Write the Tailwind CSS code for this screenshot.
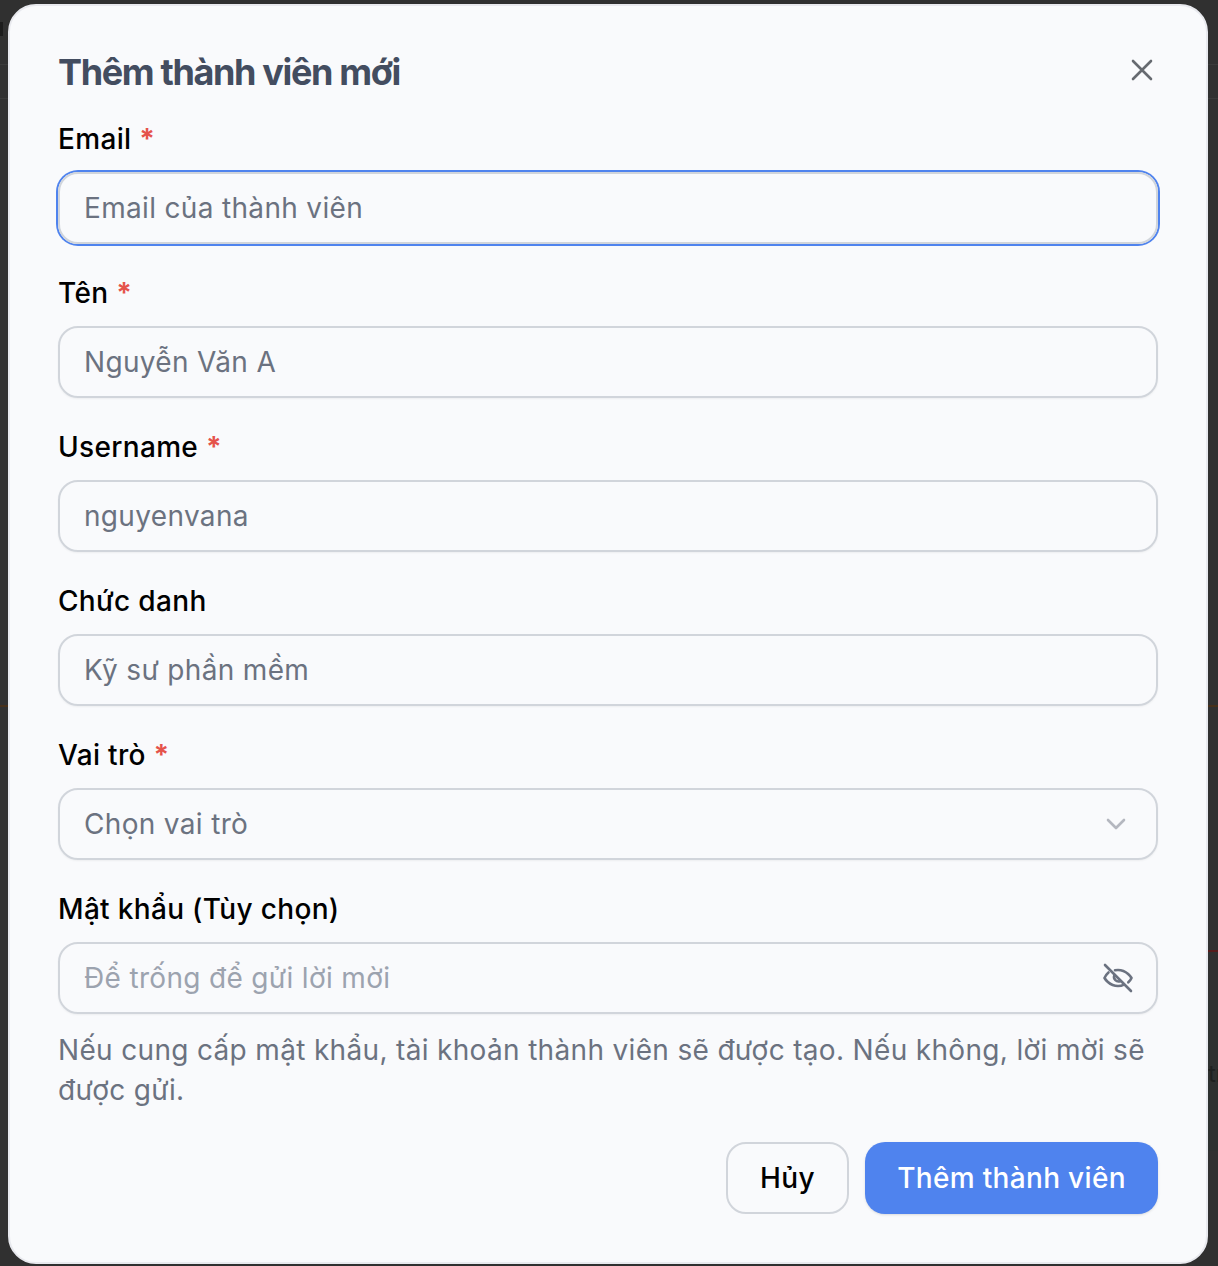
<!DOCTYPE html>
<html lang="en">
<head>
  <meta charset="UTF-8">
  <title>Thêm thành viên mới</title>
  <script src="https://cdn.jsdelivr.net/npm/@tailwindcss/browser@4"></script>
</head>
<body class="bg-[#303030] font-['Inter',sans-serif] overflow-hidden">
  <div class="h-[1266px] relative overflow-hidden pt-[4px] pl-[8px]">
    <!-- bits of the page behind the backdrop -->
    <div class="absolute left-0 right-0 top-[64px] h-px bg-[#3a3a3a]"></div>
    <div class="absolute left-0 right-0 top-[98px] h-px bg-[#3a3a3a]"></div>
    <div class="absolute left-0 right-0 top-[705px] h-[2px] bg-[#47301a]"></div>
    <div class="absolute right-0 w-[10px] top-[950px] h-[2px] bg-[#561c1c]"></div>
    <div class="absolute left-0 top-[22px] w-[3px] h-[14px] bg-[#1c1c1c]"></div>
    <div class="absolute left-[1208px] top-[1000px] w-[10px] h-[151px] bg-[#2d302f]"></div>
    <div class="absolute left-[1208px] top-[1060px] text-[24px] leading-[28px] text-[#1d201f] whitespace-nowrap">tru</div>

    <div class="relative w-[1200px] h-[1260px] rounded-[28px] bg-[#f9fafc] border-2 border-[#e8e9ee] pl-[48px] pr-[48px] tracking-[0.33px]">
      <button class="absolute top-[50px] right-[50px] text-[#666a70]">
        <svg class="w-[28px] h-[28px]" viewBox="0 0 28 28" fill="none" stroke="currentColor" stroke-width="2.6" stroke-linecap="round"><path d="M5 5l18 18M23 5L5 23"/></svg>
      </button>

      <h2 class="pt-[44px] text-[36px] leading-[44px] font-bold tracking-[-1.35px] text-[#434d60]">Thêm thành viên mới</h2>

      <form class="mt-[25px] flex flex-col gap-[29px]">
        <div>
          <label class="block text-[28px] leading-[40px] font-medium text-black">Email <span class="text-[#e5534b] font-bold">*</span></label>
          <div class="mt-[13px] h-[72px] rounded-[20px] border-[2px] border-[#d1d5db] shadow-[0_0_0_2px_#4f83ee] flex items-center px-[24px] text-[28px] text-[#6b7280]">Email của thành viên</div>
        </div>
        <div>
          <label class="block text-[28px] leading-[40px] font-medium text-black">Tên <span class="text-[#e5534b] font-bold">*</span></label>
          <div class="mt-[13px] h-[72px] rounded-[20px] border-[2px] border-[#d1d5db] shadow-[0_1px_2px_rgba(0,0,0,0.05)] flex items-center px-[24px] text-[28px] text-[#6b7280]">Nguyễn Văn A</div>
        </div>
        <div>
          <label class="block text-[28px] leading-[40px] font-medium text-black">Username <span class="text-[#e5534b] font-bold">*</span></label>
          <div class="mt-[13px] h-[72px] rounded-[20px] border-[2px] border-[#d1d5db] shadow-[0_1px_2px_rgba(0,0,0,0.05)] flex items-center px-[24px] text-[28px] text-[#6b7280]">nguyenvana</div>
        </div>
        <div>
          <label class="block text-[28px] leading-[40px] font-medium text-black">Chức danh</label>
          <div class="mt-[13px] h-[72px] rounded-[20px] border-[2px] border-[#d1d5db] shadow-[0_1px_2px_rgba(0,0,0,0.05)] flex items-center px-[24px] text-[28px] text-[#6b7280]">Kỹ sư phần mềm</div>
        </div>
        <div>
          <label class="block text-[28px] leading-[40px] font-medium text-black">Vai trò <span class="text-[#e5534b] font-bold">*</span></label>
          <div class="mt-[13px] h-[72px] rounded-[20px] border-[2px] border-[#d1d5db] shadow-[0_1px_2px_rgba(0,0,0,0.05)] flex items-center justify-between pl-[24px] pr-[28px] text-[28px] text-[#6b7280]">
            <span>Chọn vai trò</span>
            <svg class="w-[24px] h-[24px] text-[#b4b7bf]" viewBox="0 0 24 24" fill="none" stroke="currentColor" stroke-width="2.6" stroke-linecap="round" stroke-linejoin="round"><path d="M4 8l8 8 8-8"/></svg>
          </div>
        </div>
        <div>
          <label class="block text-[28px] leading-[40px] font-medium text-black">Mật khẩu (Tùy chọn)</label>
          <div class="mt-[13px] h-[72px] rounded-[20px] border-[2px] border-[#d1d5db] shadow-[0_1px_2px_rgba(0,0,0,0.05)] flex items-center justify-between pl-[24px] pr-[22px] text-[28px] text-[#9ca3af]">
            <span>Để trống để gửi lời mời</span>
            <svg class="w-[32px] h-[32px] text-[#6b7280]" viewBox="0 0 32 32" fill="none" stroke="currentColor" stroke-width="2.6" stroke-linecap="round" stroke-linejoin="round">
              <path d="M6.500 10.500C3.800 12.800 2.500 16 2.500 16s4.500 8 13.500 8c2.300 0 4.300-.5 6-1.400"/>
              <path d="M13 8.300c1-.2 2-.3 3-.3 9 0 13.500 8 13.500 8s-1 2.300-3.200 4.300"/>
              <path d="M12.500 13a4.500 4.500 0 0 0 6 6"/>
              <path d="M3 3l26 26"/>
            </svg>
          </div>
          <p class="mt-[16px] text-[28px] leading-[40px] text-[#6b7280]">Nếu cung cấp mật khẩu, tài khoản thành viên sẽ được tạo. Nếu không, lời mời sẽ được gửi.</p>
        </div>
      </form>

      <div class="mt-[32px] flex justify-end gap-[16px]">
        <button class="h-[72px] w-[123px] rounded-[20px] border-[2px] border-[#d1d5db] text-[28px] font-medium text-black">Hủy</button>
        <button class="h-[72px] w-[293px] rounded-[20px] bg-[#4f83ee] text-[28px] font-medium text-white shadow-sm">Thêm thành viên</button>
      </div>
    </div>
  </div>
</body>
</html>
